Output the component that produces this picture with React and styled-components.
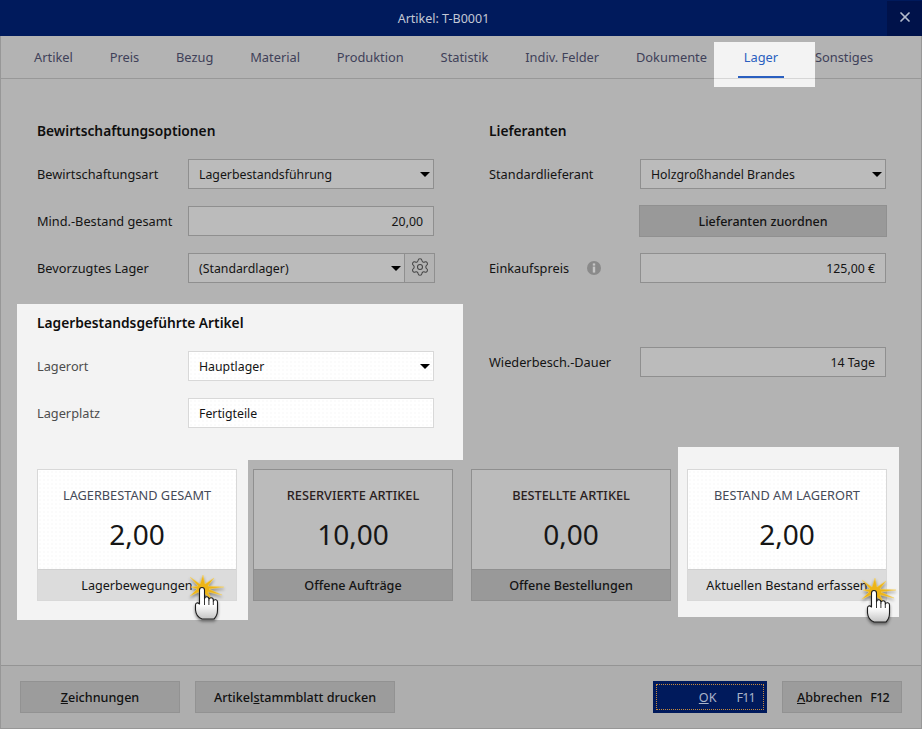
import React from "react";
import styled, { createGlobalStyle, css } from "styled-components";
import { Settings, X } from "lucide-react";

const GlobalStyle = createGlobalStyle`
	* {
		box-sizing: border-box;
	}
	html, body {
		margin: 0;
		padding: 0;
		background: #b3b3b3;
	}
	body {
		font-family: "Noto Sans", "Open Sans", "Liberation Sans", sans-serif;
		font-size: 12.8px;
		color: #141414;
	}
`;

const TABS = ["Artikel", "Preis", "Bezug", "Material", "Produktion", "Statistik", "Indiv. Felder", "Dokumente", "Lager", "Sonstiges"];

function Pointer({ left, top }) {
	return (
		<PointerC $left={left} $top={top} width="38" height="48" viewBox="0 0 38 48">
			<path
				d="M2 3 L12 10 L15 1 L17 10 L26 4 L20 12 L36 13 L21 15 L34 21 L20 18 L24 26 L16 19 L12 27 L11 18 L2 22 L9 15 L3 13 L10 12 Z"
				fill="#edb416"
				stroke="#f6d46a"
				strokeWidth="0.5"
			/>
			<defs>
				<linearGradient id="handFill" x1="0" y1="0" x2="0" y2="1">
					<stop offset="0.55" stopColor="#ffffff" />
					<stop offset="1" stopColor="#c4c4c4" />
				</linearGradient>
			</defs>
			<path
				d="M11.5 16 a2.5 2.5 0 0 1 5 0 V25 a2.2 2.2 0 0 1 4.4 0 v1 a2.2 2.2 0 0 1 4.4 0 v1 a2.2 2.2 0 0 1 4.2 1 V36 c0 4 -1.5 7 -3.5 9 H14 c-3 -1 -6 -4 -6.5 -9 V31 c0 -2 2 -3 4 -1 Z"
				fill="url(#handFill)"
				stroke="#1c1c1c"
				strokeWidth="1.1"
				strokeLinejoin="round"
			/>
			<path d="M16.5 25 V31 M20.9 26 V31 M25.3 27 V31" stroke="#1c1c1c" strokeWidth="0.9" fill="none" />
		</PointerC>
	);
}

function InfoIcon() {
	return (
		<InfoSvg width="14" height="14" viewBox="0 0 14 14">
			<circle cx="7" cy="7" r="7" fill="#8a8a8a" />
			<rect x="5.8" y="2.4" width="2.4" height="2.2" fill="#c6c6c6" />
			<rect x="5.8" y="5.6" width="2.4" height="6" fill="#c6c6c6" />
		</InfoSvg>
	);
}

function Card({ title, value, action, light, spot, pointer }) {
	return (
		<CardC $light={light}>
			{spot}
			<CardBody $light={light}>
				<CardTitle $light={light}>{title}</CardTitle>
				<CardValue>{value}</CardValue>
			</CardBody>
			<CardAction $light={light}>
				{action}
				{pointer}
			</CardAction>
		</CardC>
	);
}

export default function App() {
	return (
		<>
			<GlobalStyle />
			<Window>
				<TitleBar>
					Artikel: T-B0001
					<CloseButton>
						<X size={16} strokeWidth={2.6} />
					</CloseButton>
				</TitleBar>
				<Frame>
					<TabBar>
						{TABS.map((tab) =>
							tab === "Lager" ? (
								<ActiveTab key={tab}>
									<TabSpot />
									<TabSpotLine />
									{tab}
								</ActiveTab>
							) : (
								<Tab key={tab}>{tab}</Tab>
							)
						)}
					</TabBar>
					<Content>
						<Columns>
							<Column>
								<Heading>Bewirtschaftungsoptionen</Heading>
								<Rows>
									<FieldRow>
										<Label>Bewirtschaftungsart</Label>
										<Field>
											Lagerbestandsführung
											<Caret />
										</Field>
									</FieldRow>
									<FieldRow>
										<Label>Mind.-Bestand gesamt</Label>
										<Field $right>20,00</Field>
									</FieldRow>
									<FieldRow>
										<Label>Bevorzugtes Lager</Label>
										<Field $short>
											(Standardlager)
											<Caret />
										</Field>
										<GearButton>
											<Settings size={20} strokeWidth={1.25} />
										</GearButton>
									</FieldRow>
								</Rows>
								<StockSection>
									<PanelSpot />
									<Heading>Lagerbestandsgeführte Artikel</Heading>
									<Rows>
										<FieldRow>
											<Label $muted>Lagerort</Label>
											<Field $light>
												Hauptlager
												<Caret />
											</Field>
										</FieldRow>
										<FieldRow>
											<Label $muted>Lagerplatz</Label>
											<Field $light>Fertigteile</Field>
										</FieldRow>
									</Rows>
								</StockSection>
							</Column>
							<Column>
								<Heading>Lieferanten</Heading>
								<Rows>
									<FieldRow>
										<Label>Standardlieferant</Label>
										<Field>
											Holzgroßhandel Brandes
											<Caret />
										</Field>
									</FieldRow>
									<FieldRow>
										<AssignButton>Lieferanten zuordnen</AssignButton>
									</FieldRow>
									<FieldRow>
										<Label>
											Einkaufspreis
											<InfoIcon />
										</Label>
										<Field $right>125,00 €</Field>
									</FieldRow>
									<FieldRow />
									<FieldRow>
										<Label>Wiederbesch.-Dauer</Label>
										<Field $right>14 Tage</Field>
									</FieldRow>
								</Rows>
							</Column>
						</Columns>
						<Cards>
							<Card
								light
								title="LAGERBESTAND GESAMT"
								value="2,00"
								action="Lagerbewegungen"
								spot={<CardSpot $inset="-10px -12px -20px -21px" />}
								pointer={<Pointer left={150} top={4} />}
							/>
							<Card title="RESERVIERTE ARTIKEL" value="10,00" action="Offene Aufträge" />
							<Card title="BESTELLTE ARTIKEL" value="0,00" action="Offene Bestellungen" />
							<Card
								light
								title="BESTAND AM LAGERORT"
								value="2,00"
								action="Aktuellen Bestand erfassen"
								spot={<CardSpot $inset="-23px -13px -17px -10px" />}
								pointer={<Pointer left={172} top={7} />}
							/>
						</Cards>
					</Content>
					<Footer>
						<FooterButton $width={160}>
							<u>Z</u>eichnungen
						</FooterButton>
						<FooterButton $width={200}>
							Artikel<u>s</u>tammblatt drucken
						</FooterButton>
						<FooterSpacer />
						<OkButton>
							<span>
								<u>O</u>K
							</span>
							<KeyHint>F11</KeyHint>
						</OkButton>
						<FooterButton $width={120} $keys>
							<span>
								<u>A</u>bbrechen
							</span>
							<KeyHint>F12</KeyHint>
						</FooterButton>
					</Footer>
				</Frame>
			</Window>
		</>
	);
}

const dotted = css`
	background-color: #ffffff;
	background-image: radial-gradient(#fbfbfb 0.7px, transparent 0.9px);
	background-size: 4px 4px;
`;

const Window = styled.div`
	width: 922px;
	height: 729px;
	display: flex;
	flex-direction: column;
	background: #b3b3b3;
	isolation: isolate;
	overflow: hidden;
`;

const TitleBar = styled.header`
	position: relative;
	height: 36px;
	flex: none;
	display: flex;
	align-items: center;
	justify-content: center;
	padding-right: 35px;
	background: #001a5c;
	color: #c3c8d5;
	font-size: 12.5px;
`;

const CloseButton = styled.div`
	position: absolute;
	top: 1px;
	right: 0;
	width: 35px;
	height: 35px;
	display: flex;
	align-items: center;
	justify-content: center;
	padding-bottom: 3px;
	background: #00124a;
	color: #b4bccd;
`;

const Frame = styled.div`
	flex: 1;
	display: flex;
	flex-direction: column;
	border: 1px solid #979797;
	border-top: 0;
`;

const TabBar = styled.nav`
	height: 43px;
	flex: none;
	display: flex;
	align-items: center;
	gap: 36.8px;
	padding-left: 33px;
	border-bottom: 1px solid #989898;
`;

const Tab = styled.div`
	position: relative;
	color: #3f4159;
	font-size: 12.85px;
`;

const ActiveTab = styled(Tab)`
	color: #2a5fc0;
	&::after {
		content: "";
		position: absolute;
		left: -6px;
		right: -6px;
		bottom: -12px;
		height: 2px;
		background: #2a5fc0;
	}
`;

const TabSpot = styled.div`
	position: absolute;
	z-index: -1;
	left: -30px;
	right: -37px;
	top: -6px;
	bottom: -21px;
	background: #f3f3f3;
`;

const TabSpotLine = styled.div`
	position: absolute;
	left: -30px;
	right: -37px;
	bottom: -13px;
	height: 1px;
	background: #d6d6d6;
`;

const Content = styled.main`
	flex: 1;
	display: flex;
	flex-direction: column;
	padding: 42px 34px 0 36px;
`;

const Columns = styled.div`
	display: flex;
	gap: 54px;
`;

const Column = styled.section`
	width: 398px;
	display: flex;
	flex-direction: column;
`;

const Heading = styled.h2`
	margin: 0 0 18px;
	height: 20px;
	line-height: 20px;
	font-size: 13.75px;
	font-weight: 600;
	color: #0e0e0e;
`;

const Rows = styled.div`
	display: flex;
	flex-direction: column;
	gap: 17px;
`;

const FieldRow = styled.div`
	height: 30px;
	display: flex;
	align-items: center;
`;

const Label = styled.div`
	width: 151px;
	flex: none;
	display: flex;
	align-items: center;
	font-size: 12.75px;
	color: ${(p) => (p.$muted ? "#4d4d4d" : "#141414")};
`;

const InfoSvg = styled.svg`
	margin-left: 18px;
`;

const Field = styled.div`
	position: relative;
	width: ${(p) => (p.$short ? "217px" : "246px")};
	height: 30px;
	flex: none;
	display: flex;
	align-items: center;
	justify-content: ${(p) => (p.$right ? "flex-end" : "flex-start")};
	padding: 0 10px;
	border: 1px solid ${(p) => (p.$light ? "#d8d8d8" : "#8f8f8f")};
	background: #bbbbbb;
	${(p) => p.$light && dotted}
	color: #141414;
	font-size: 12.3px;
`;

const Caret = styled.span`
	position: absolute;
	right: 3px;
	top: 12px;
	width: 0;
	height: 0;
	border-left: 5px solid transparent;
	border-right: 5px solid transparent;
	border-top: 5px solid #000000;
`;

const GearButton = styled.div`
	width: 30px;
	height: 30px;
	flex: none;
	display: flex;
	align-items: center;
	justify-content: center;
	border: 1px solid #8f8f8f;
	border-left: 0;
	padding-bottom: 2px;
	background: #b3b3b3;
	color: #454545;
`;

const StockSection = styled.div`
	position: relative;
	margin-top: 21px;
	padding-top: 9px;
`;

const PanelSpot = styled.div`
	position: absolute;
	z-index: -1;
	top: 0;
	left: -20px;
	right: -28px;
	bottom: -32px;
	background: #f3f3f3;
`;

const AssignButton = styled.div`
	width: 248px;
	height: 32px;
	margin-left: 150px;
	display: flex;
	align-items: center;
	justify-content: center;
	border: 1px solid #909090;
	background: #999999;
	font-size: 12.5px;
	font-weight: 500;
`;

const Cards = styled.div`
	display: flex;
	gap: 16px;
	margin-top: 41px;
	& > :nth-child(3) {
		margin-left: 2px;
	}
`;

const CardC = styled.article`
	position: relative;
	width: 200px;
	height: 132px;
	display: flex;
	flex-direction: column;
	border: 1px solid ${(p) => (p.$light ? "#d8d8d8" : "#8f8f8f")};
`;

const CardSpot = styled.div`
	position: absolute;
	z-index: -1;
	inset: ${(p) => p.$inset};
	background: #f3f3f3;
`;

const CardBody = styled.div`
	flex: 1;
	display: flex;
	flex-direction: column;
	align-items: center;
	background: #bbbbbb;
	${(p) => p.$light && dotted}
`;

const CardTitle = styled.div`
	margin-top: 15px;
	height: 20px;
	line-height: 20px;
	font-size: 12.75px;
	font-weight: ${(p) => (p.$light ? 400 : 500)};
	color: ${(p) => (p.$light ? "#454a58" : "#2a2020")};
`;

const CardValue = styled.div`
	margin-top: 9px;
	height: 40px;
	line-height: 40px;
	font-size: 28px;
	color: #161616;
`;

const CardAction = styled.div`
	position: relative;
	height: 31px;
	flex: none;
	display: flex;
	align-items: center;
	justify-content: center;
	border-top: 1px solid ${(p) => (p.$light ? "#d0d0d0" : "#8f8f8f")};
	background: ${(p) => (p.$light ? "#dcdcdc" : "#999999")};
	font-weight: ${(p) => (p.$light ? 400 : 500)};
	font-size: 12.6px;
`;

const PointerC = styled.svg`
	position: absolute;
	left: ${(p) => p.$left}px;
	top: ${(p) => p.$top}px;
	filter: drop-shadow(0 2px 1.5px rgba(0, 0, 0, 0.45));
`;

const Footer = styled.footer`
	height: 63px;
	flex: none;
	display: flex;
	align-items: flex-start;
	gap: 15px;
	padding: 15px 19px 0;
	border-top: 1px solid #949494;
	background: #aeaeae;
`;

const FooterSpacer = styled.div`
	flex: 1;
`;

const footerButton = css`
	height: 32px;
	display: flex;
	align-items: center;
	font-size: 12.6px;
	font-weight: 500;
`;

const FooterButton = styled.div`
	${footerButton}
	width: ${(p) => p.$width}px;
	justify-content: ${(p) => (p.$keys ? "space-between" : "center")};
	padding: ${(p) => (p.$keys ? "0 12px 0 14px" : "0")};
	border: 1px solid #929292;
	background: #9c9c9c;
	color: #111111;
`;

const KeyHint = styled.span`
	letter-spacing: -0.8px;
`;

const OkButton = styled.div`
	${footerButton}
	position: relative;
	width: 114px;
	justify-content: flex-end;
	gap: 20px;
	padding-right: 12px;
	background: #001a5c;
	color: #a8b3c9;
	font-weight: 400;
	&::after {
		content: "";
		position: absolute;
		inset: 3px;
		border: 1px dotted #c98a3a;
	}
`;
